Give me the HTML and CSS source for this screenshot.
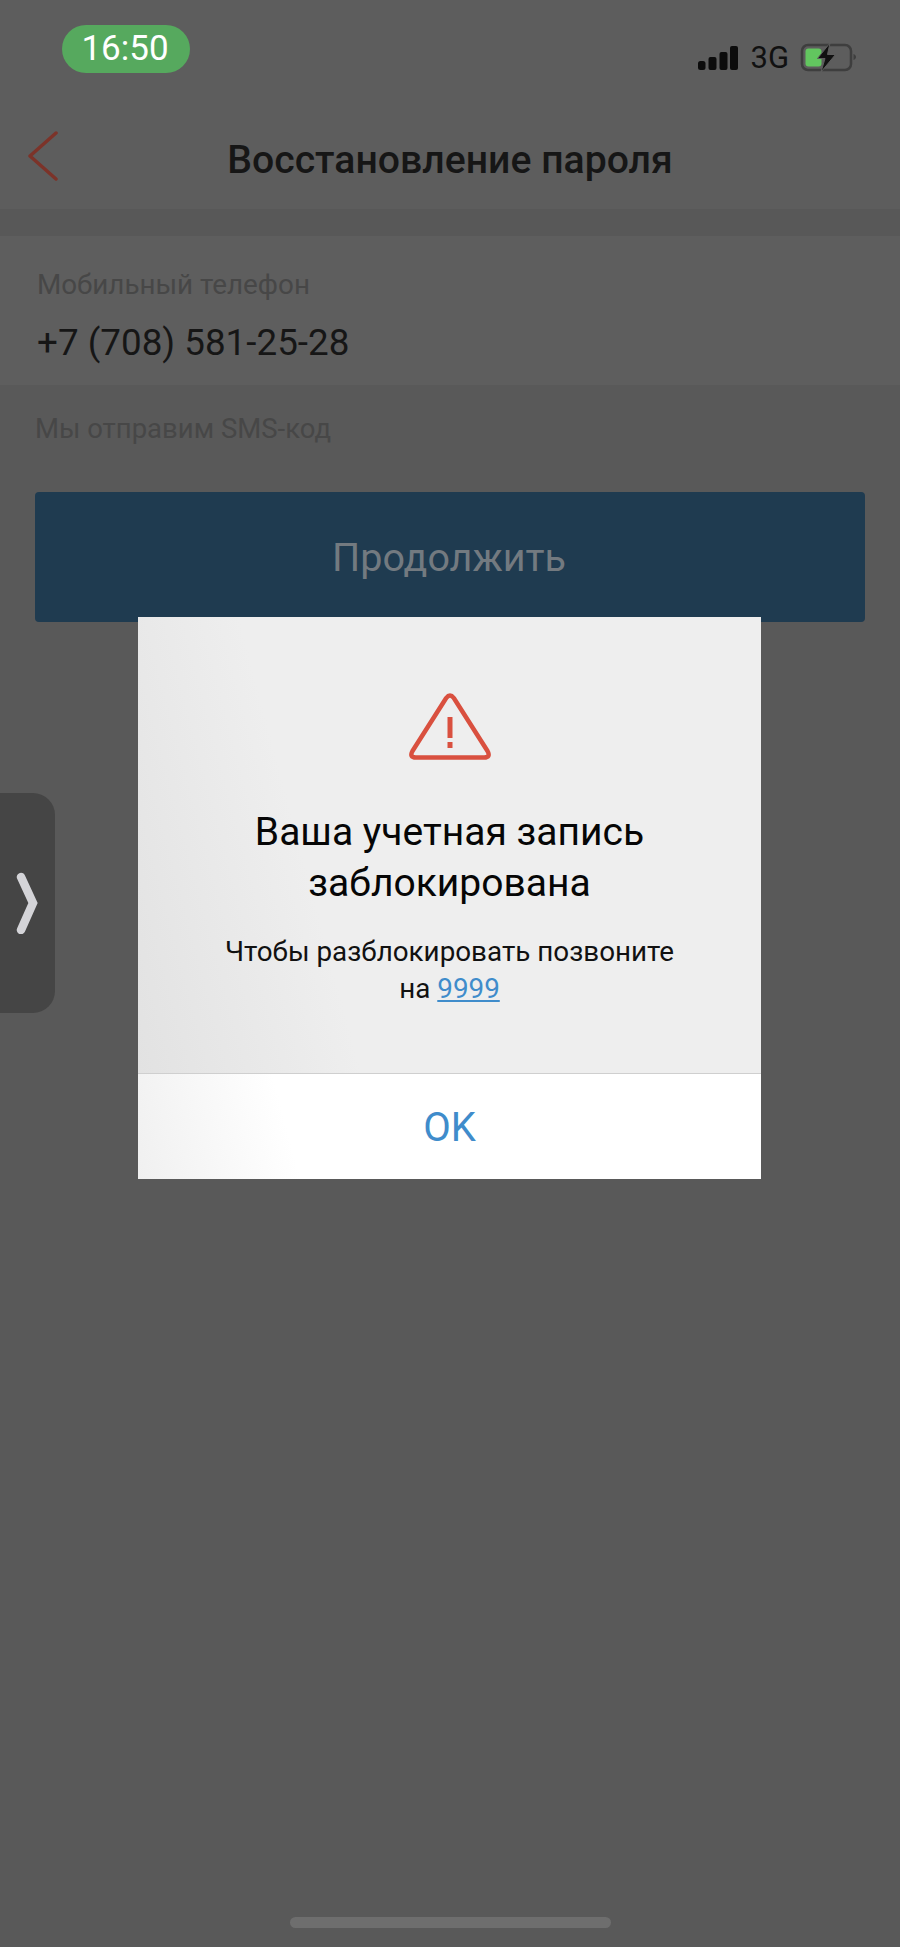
FILE: index.html

```html
<!DOCTYPE html>
<html lang="ru">
<head>
  <meta charset="utf-8">
  <meta name="viewport" content="width=device-width, initial-scale=1.0">
  <title>Восстановление пароля</title>
  <link rel="stylesheet" href="styles.css">
</head>
<body>
  <div class="screen">
    <div class="status-bar">
      <div class="time-pill">16:50</div>
      <div class="status-icons">
        <svg class="signal" width="40" height="24" viewBox="0 0 40 24">
          <rect x="0" y="15" width="7.500" height="9" rx="2.500"/>
          <rect x="10.500" y="11" width="8" height="13" rx="2"/>
          <rect x="21.500" y="6" width="8" height="18" rx="2"/>
          <rect x="32" y="0" width="8" height="24" rx="2"/>
        </svg>
        <span class="network">3G</span>
        <svg class="battery" width="58" height="30" viewBox="0 0 58 30">
          <rect x="3" y="2" width="49" height="25" rx="6" fill="none" stroke="#3e3e3e" stroke-width="2.500"/>
          <rect x="6.500" y="5.500" width="16" height="18" rx="3" fill="#62c65f"/>
          <path d="M54.500 11v6c1.500-.5 2.500-1.700 2.500-3s-1-2.500-2.500-3z" fill="#3e3e3e"/>
          <path d="M31 0 L18.500 15.500 H26 L22 29 L36.500 11.500 H28.500 Z" fill="#111" stroke="#5e5e5e" stroke-width="1"/>
        </svg>
      </div>
    </div>

    <header class="nav-bar">
      <svg class="back" width="32" height="50" viewBox="0 0 32 50">
        <path d="M29 2 L3 25 L29 48" fill="none" stroke="#7c3329" stroke-width="3.500" stroke-linecap="round" stroke-linejoin="round"/>
      </svg>
      <h1>Восстановление пароля</h1>
    </header>

    <div class="band"></div>

    <section class="field">
      <div class="field-label">Мобильный телефон</div>
      <div class="field-value">+7 (708) 581-25-28</div>
    </section>

    <p class="hint">Мы отправим SMS-код</p>

    <button class="continue" type="button">Продолжить</button>

    <div class="side-handle">
      <svg width="24" height="62" viewBox="0 0 24 62">
        <path d="M6 5 L18 31 L6 58" fill="none" stroke="#d4d4d8" stroke-width="8.500" stroke-linecap="round" stroke-linejoin="miter"/>
      </svg>
    </div>

    <div class="modal">
      <div class="modal-body">
        <svg class="warning" width="84" height="72" viewBox="0 0 84 72">
          <path d="M38.200 8 Q42 3 45.800 8 L79.500 61 Q83 67.500 76 67.500 H8 Q1 67.500 4.500 61 Z" fill="none" stroke="#d9503f" stroke-width="4.500" stroke-linejoin="round"/>
          <rect x="39.500" y="27" width="5" height="21" fill="#d9503f"/>
          <rect x="39.500" y="52" width="5" height="6" fill="#d9503f"/>
        </svg>
        <h2>Ваша учетная запись<br>заблокирована</h2>
        <p>Чтобы разблокировать позвоните<br>на <a href="tel:9999">9999</a></p>
      </div>
      <div class="modal-footer">OK</div>
    </div>

    <div class="home-bar"></div>
  </div>
</body>
</html>
```

FILE: styles.css

```css
* {
  box-sizing: border-box;
}
html, body {
  margin: 0;
  padding: 0;
}
body {
  font-family: Roboto, "Liberation Sans", sans-serif;
  background-color: #595959;
}
.screen {
  position: relative;
  width: 900px;
  height: 1947px;
  overflow: hidden;
  background-color: #595959;
}

/* status bar */
.status-bar {
  display: flex;
  justify-content: space-between;
  height: 104px;
  padding: 25px 43px 0 62px;
  background-color: #5d5d5d;
}
.time-pill {
  width: 128px;
  height: 48px;
  padding-right: 2px;
  border-radius: 24px;
  background-color: #56a95e;
  color: #fff;
  font-size: 35px;
  line-height: 48px;
  text-align: center;
}
.status-icons {
  display: flex;
  align-items: center;
  height: 34px;
  margin-top: 16px;
}
.signal {
  fill: #0c0c0c;
}
.network {
  margin: 0 10px 0 12px;
  color: #111;
  font-size: 31px;
  line-height: 34px;
}

/* nav */
.nav-bar {
  position: relative;
  display: flex;
  align-items: center;
  justify-content: center;
  height: 105px;
  padding-top: 7px;
  background-color: #5d5d5d;
}
.back {
  position: absolute;
  left: 27px;
  top: 27px;
}
.nav-bar h1 {
  margin: 0;
  color: #161616;
  font-size: 39.200px;
  font-weight: 500;
}
.band {
  height: 27px;
  background-color: #585858;
}

/* form */
.field {
  height: 149px;
  padding: 33px 37px 0;
  background-color: #5e5e5e;
}
.field-label {
  color: #474747;
  font-size: 27.800px;
  line-height: 32px;
}
.field-value {
  margin-top: 21px;
  color: #161616;
  font-size: 36.800px;
  line-height: 42px;
}
.hint {
  margin: 28px 0 0 35px;
  color: #474747;
  font-size: 27.500px;
  line-height: 32px;
}
.continue {
  display: block;
  width: 830px;
  height: 130px;
  margin: 47px 0 0 35px;
  padding: 0 2px 0 0;
  border: 0;
  border-radius: 4px;
  background-color: #1f3b50;
  color: #737a80;
  font-family: inherit;
  font-size: 39.500px;
}

/* left drawer tab */
.side-handle {
  position: absolute;
  left: 0;
  top: 793px;
  display: flex;
  align-items: center;
  width: 55px;
  height: 220px;
  padding-left: 15px;
  border-radius: 0 22px 22px 0;
  background-color: #454545;
}

/* dialog */
.modal {
  position: absolute;
  left: 138px;
  top: 617px;
  width: 623px;
  height: 562px;
  display: flex;
  flex-direction: column;
}
.modal-body {
  display: flex;
  flex-direction: column;
  flex-shrink: 0;
  align-items: center;
  height: 457px;
  padding-top: 73px;
  background: linear-gradient(75deg, #e2e2e2 0, #eeeeee 30%);
  border-bottom: 1px solid #cfcfcf;
  text-align: center;
}
.modal-body h2 {
  margin: 45px 0 0;
  color: #060606;
  font-size: 39px;
  font-weight: 400;
  line-height: 51px;
}
.modal-body p {
  margin: 24px 0 0;
  color: #111;
  font-size: 27.800px;
  line-height: 37px;
}
.modal-body a {
  color: #3f8ccb;
}
.modal-footer {
  flex: 1;
  padding-top: 3px;
  background: linear-gradient(75deg, #f0f0f0 0, #ffffff 25%);
  color: #3f8ccb;
  font-size: 40px;
  line-height: 102px;
  text-align: center;
}

.home-bar {
  position: absolute;
  left: 290px;
  top: 1917px;
  width: 321px;
  height: 11px;
  border-radius: 6px;
  background-color: #6e6e6e;
}
```
